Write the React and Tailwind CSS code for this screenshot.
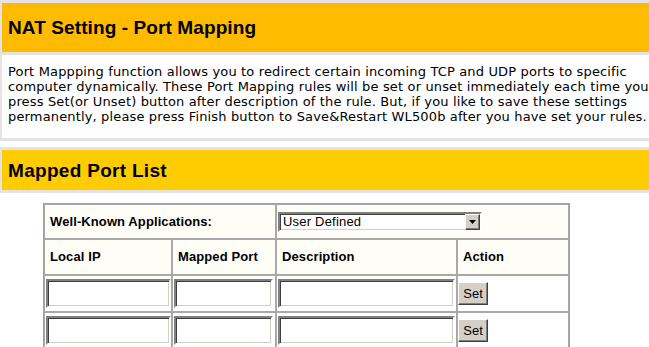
import React from "react";

const inset =
  "border-2 border-t-[#808080] border-l-[#808080] border-b-[#ffffff] border-r-[#ffffff] shadow-[inset_1px_1px_0_#404040,inset_-1px_-1px_0_#d4d0c8] bg-white";

function Input({ w }) {
  return <div className={`${inset} h-[29px] ${w}`} />;
}

function SetBtn() {
  return (
    <div className="w-[30px] h-[23px] bg-[#d4d0c8] border border-t-[#ffffff] border-l-[#ffffff] border-b-[#404040] border-r-[#404040] shadow-[inset_-1px_-1px_0_#808080] flex items-center justify-center text-[13px] text-black font-['Liberation_Sans',Arial,sans-serif]">
      Set
    </div>
  );
}

const lines = [
  "Port Mappping function allows you to redirect certain incoming TCP and UDP ports to specific",
  "computer dynamically. These Port Mapping rules will be set or unset immediately each time you",
  "press Set(or Unset) button after description of the rule. But, if you like to save these settings",
  "permanently, please press Finish button to Save&Restart WL500b after you have set your rules.",
];

export default function App() {
  const td = "border border-[#a8a8a8] p-0";
  const th = "border border-[#a8a8a8] bg-[#fffef6] px-[5px] text-left font-bold text-[13px] tracking-[0.1px] text-black";
  return (
    <div className="w-[649px] h-[347px] overflow-hidden bg-white font-['Liberation_Sans',Arial,sans-serif]">
      {/* Block 1 */}
      <div className="w-[700px] bg-[#e5e1e5] pt-[3px] pb-[3px] pl-[2px]">
        <div className="h-[49px] bg-[#ffbb00] flex items-center pl-[6px]">
          <span className="text-[19px] font-bold text-black leading-none tracking-[0.1px]">NAT Setting - Port Mapping</span>
        </div>
        <div className="mt-[3px] h-[83px] bg-white pl-[6px] pt-[9px] font-['DejaVu_Sans',Verdana,sans-serif] text-[13px] leading-[15px] tracking-[0.15px] text-black">
          {lines.map((l, i) => (
            <div key={i} className="whitespace-nowrap">{l}</div>
          ))}
        </div>
      </div>

      {/* Block 2 */}
      <div className="mt-[6px] w-[700px] bg-[#e5e1e5] pt-[3px] pb-[3px] pl-[2px]">
        <div className="h-[40px] bg-[#ffcc00] flex items-center pl-[6px]">
          <span className="text-[19px] font-bold text-black leading-none tracking-[0.3px]">Mapped Port List</span>
        </div>
      </div>

      {/* Table */}
      <table className="mt-[10px] ml-[43px] w-[527px] table-fixed border-separate border-spacing-0 border border-[#a0a0a0]">
        <colgroup>
          <col className="w-[128px]" />
          <col className="w-[104px]" />
          <col className="w-[181px]" />
          <col className="w-[112px]" />
        </colgroup>
        <tbody>
          <tr className="h-[35px]">
            <td colSpan={2} className={th}>Well-Known Applications:</td>
            <td colSpan={2} className="border border-[#a8a8a8] bg-[#fffef6] pl-[1px]">
              <div className={`${inset} w-[204px] h-[20px] flex items-center justify-between pl-[3px] pr-0`}>
                <span className="text-[13px] text-black font-normal tracking-[0.2px]">User Defined</span>
                <span className="w-[15px] h-[16px] bg-[#d4d0c8] border border-t-[#ffffff] border-l-[#ffffff] border-b-[#404040] border-r-[#404040] shadow-[inset_-1px_-1px_0_#808080] flex items-center justify-center">
                  <svg width="7" height="4" viewBox="0 0 7 4"><path d="M0 0h7L3.5 4z" fill="#000" /></svg>
                </span>
              </div>
            </td>
          </tr>
          <tr className="h-[36px]">
            <td className={th}>Local IP</td>
            <td className={th}>Mapped Port</td>
            <td className={th}>Description</td>
            <td className={th}>Action</td>
          </tr>
          {[0, 1].map((i) => (
            <tr key={i} className="h-[37px]">
              <td className={`${td} pl-[1px]`}><Input w="w-[125px]" /></td>
              <td className={`${td} pl-[1px]`}><Input w="w-[99px]" /></td>
              <td className={`${td} pl-[1px]`}><Input w="w-[177px]" /></td>
              <td className={`${td} pl-[0px]`}><SetBtn /></td>
            </tr>
          ))}
        </tbody>
      </table>
    </div>
  );
}
